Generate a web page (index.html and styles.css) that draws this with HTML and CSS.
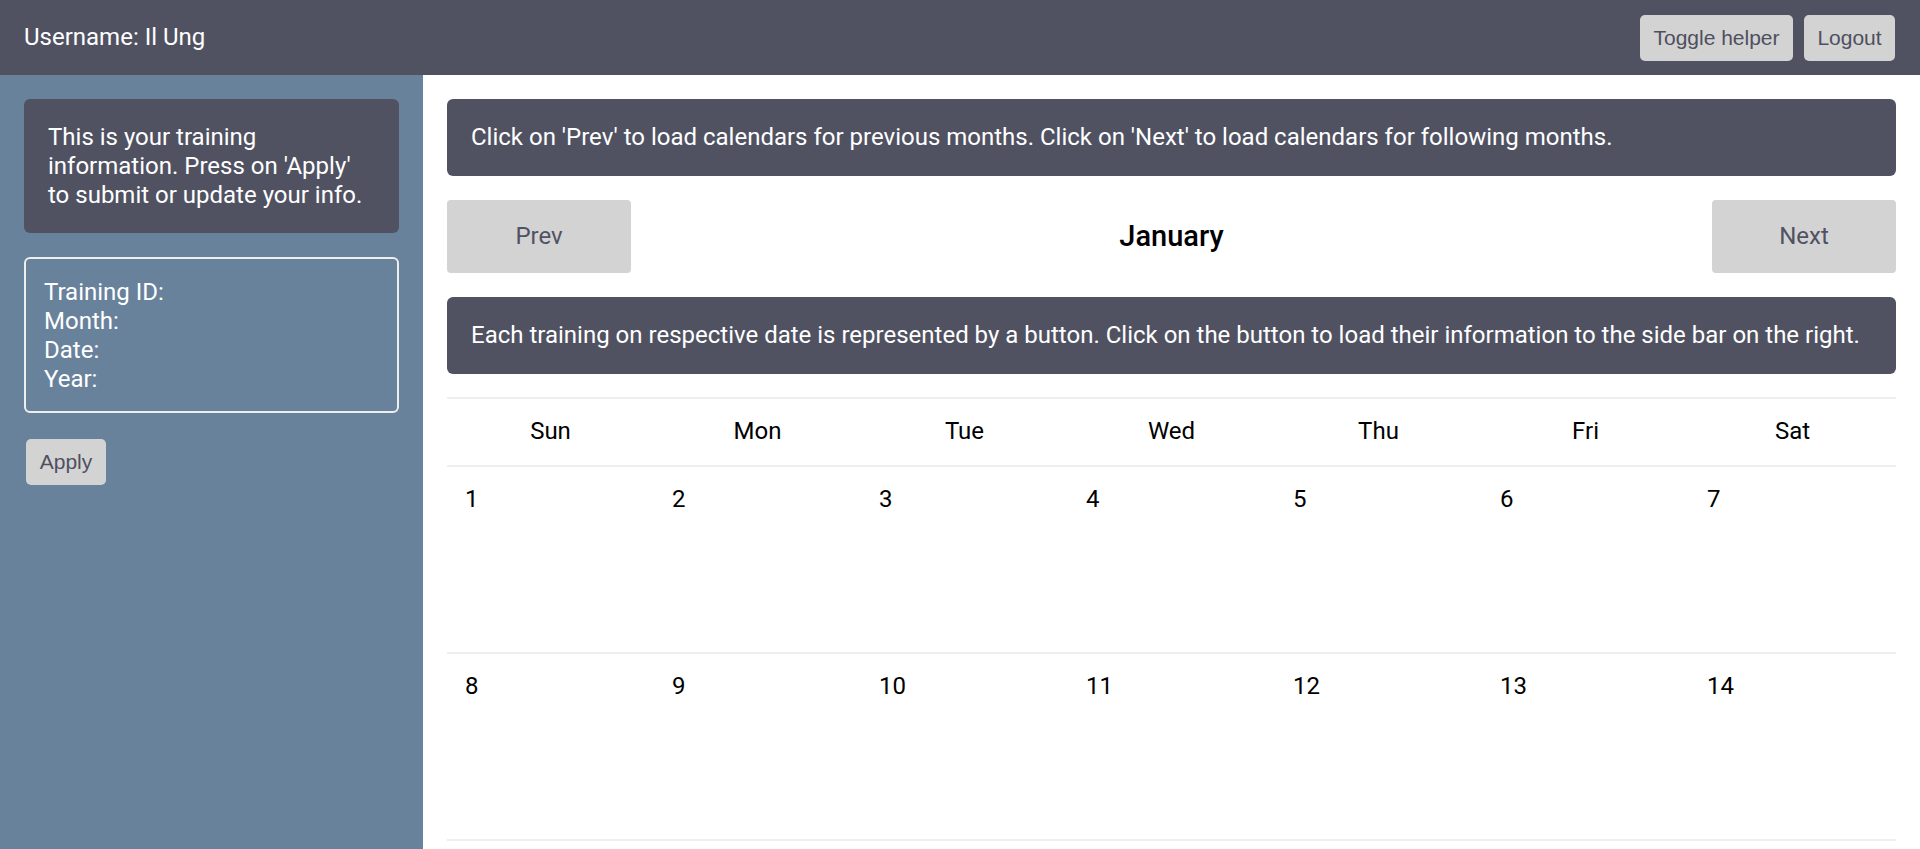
FILE: index.html
```html
<!DOCTYPE html>
<html lang="en">
<head>
<meta charset="utf-8">
<title>Training Calendar</title>
<link rel="stylesheet" href="styles.css">
</head>
<body>
<header class="topbar">
  <div class="username">Username: Il Ung</div>
  <div class="top-actions">
    <button class="top-btn toggle-btn">Toggle helper</button>
    <button class="top-btn logout-btn">Logout</button>
  </div>
</header>
<div class="layout">
  <aside class="sidebar">
    <div class="helper">This is your training information. Press on 'Apply' to submit or update your info.</div>
    <div class="info-card">
      <div>Training ID:</div>
      <div>Month:</div>
      <div>Date:</div>
      <div>Year:</div>
    </div>
    <button class="apply-btn">Apply</button>
  </aside>
  <main class="main">
    <div class="helper">Click on 'Prev' to load calendars for previous months. Click on 'Next' to load calendars for following months.</div>
    <div class="nav-row">
      <button class="nav-btn">Prev</button>
      <h2 class="month">January</h2>
      <button class="nav-btn">Next</button>
    </div>
    <div class="helper">Each training on respective date is represented by a button. Click on the button to load their information to the side bar on the right.</div>
    <table class="calendar">
      <thead>
        <tr><th>Sun</th><th>Mon</th><th>Tue</th><th>Wed</th><th>Thu</th><th>Fri</th><th>Sat</th></tr>
      </thead>
      <tbody>
        <tr><td>1</td><td>2</td><td>3</td><td>4</td><td>5</td><td>6</td><td>7</td></tr>
        <tr><td>8</td><td>9</td><td>10</td><td>11</td><td>12</td><td>13</td><td>14</td></tr>
        <tr><td>15</td><td>16</td><td>17</td><td>18</td><td>19</td><td>20</td><td>21</td></tr>
        <tr><td>22</td><td>23</td><td>24</td><td>25</td><td>26</td><td>27</td><td>28</td></tr>
        <tr><td>29</td><td>30</td><td>31</td><td></td><td></td><td></td><td></td></tr>
      </tbody>
    </table>
  </main>
</div>
</body>
</html>
```

FILE: styles.css
```css
* {
  box-sizing: border-box;
}

html, body {
  margin: 0;
  padding: 0;
}

body {
  font-family: Roboto, "Liberation Sans", sans-serif;
  font-size: 24px;
  line-height: 1.2;
  color: #000;
  background: #fff;
}

.topbar {
  height: 75px;
  background: #505262;
  display: flex;
  align-items: center;
  justify-content: space-between;
  padding: 0 25px 0 24px;
}

.username {
  color: #fff;
  font-size: 24px;
}

.top-actions {
  display: flex;
  gap: 11px;
}

.top-btn,
.apply-btn {
  font-family: "Liberation Sans", Arial, sans-serif;
  font-size: 21px;
  color: #4e5060;
  background: #d3d3d3;
  border: none;
  border-radius: 5px;
  height: 46px;
  padding: 0;
  cursor: pointer;
}

.toggle-btn { width: 153px; }
.logout-btn { width: 91px; }

.layout {
  display: flex;
  align-items: stretch;
}

.sidebar {
  width: 423px;
  flex-shrink: 0;
  background: #68829c;
  padding: 24px;
  display: flex;
  flex-direction: column;
  align-items: stretch;
}

.helper {
  background: #505262;
  color: #fff;
  border-radius: 6px;
  padding: 24px;
}

.info-card {
  margin-top: 24px;
  border: 2px solid #eeeeee;
  border-radius: 6px;
  color: #fff;
  padding: 19px 17px 17px 18px;
}

.apply-btn {
  align-self: flex-start;
  margin: 26px 0 0 2px;
  width: 80px;
}

.main {
  flex: 1;
  padding: 24px;
  display: flex;
  flex-direction: column;
  gap: 24px;
  min-width: 0;
}

.nav-row {
  display: flex;
  align-items: center;
  justify-content: space-between;
}

.nav-btn {
  width: 184px;
  height: 73px;
  background: #d3d3d3;
  border: none;
  border-radius: 4px;
  font-family: Roboto, sans-serif;
  font-size: 24px;
  color: #505262;
  cursor: pointer;
}

.month {
  margin: 0;
  font-size: 29px;
  font-weight: 500;
}

.calendar {
  width: 100%;
  border-collapse: separate;
  border-spacing: 0;
  table-layout: fixed;
  margin-top: -1px;
}

.calendar th,
.calendar td {
  border-top: 2px solid #eeeeee;
}

.calendar th {
  height: 68px;
  font-weight: 400;
  text-align: center;
  vertical-align: middle;
  padding: 0;
}

.calendar td {
  height: 187px;
  text-align: left;
  vertical-align: top;
  padding: 18px 16px 18px 18px;
}

.calendar tbody tr:last-child td {
  border-bottom: 2px solid #eeeeee;
}
```
